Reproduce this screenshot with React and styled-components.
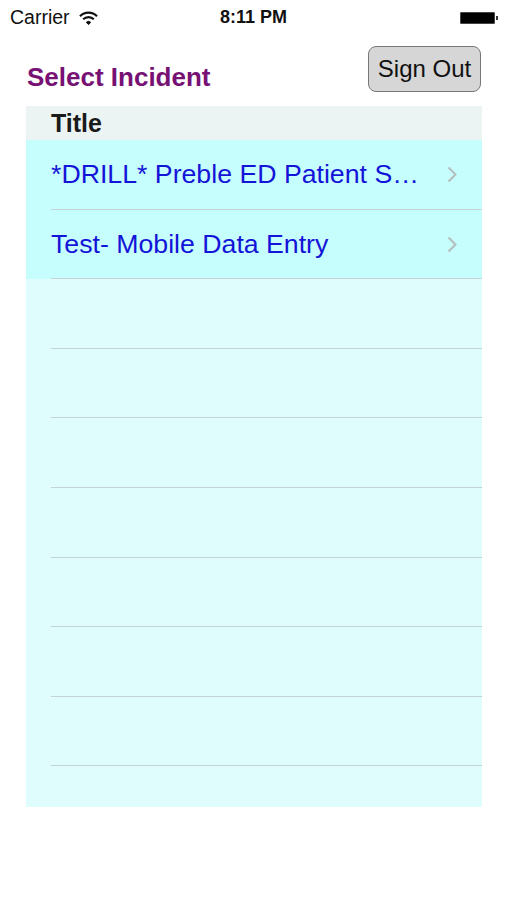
import React from 'react';
import styled, { createGlobalStyle } from 'styled-components';

const GlobalStyle = createGlobalStyle`
  html, body {
    margin: 0;
    padding: 0;
    background: #ffffff;
    font-family: "Liberation Sans", Arial, sans-serif;
  }
`;

const StyledScreen = styled.div`
  width: 507px;
  height: 900px;
  background: #ffffff;
  overflow: hidden;
`;

const StyledStatusBar = styled.div`
  height: 35px;
  display: grid;
  grid-template-columns: 1fr auto 1fr;
  align-items: center;
  padding: 0 10px;
  font-size: 19.5px;
  color: #111;
`;

const StyledCarrier = styled.div`
  display: flex;
  align-items: center;
  gap: 9px;
`;

const StyledClock = styled.div`
  font-weight: bold;
  font-size: 18px;
`;

const StyledBattery = styled.div`
  justify-self: end;
  display: flex;
  align-items: center;
  gap: 1px;
  margin-right: -1px;
`;

const StyledBatteryBody = styled.div`
  width: 33px;
  height: 10px;
  background: #000;
  border: 1px solid #444;
  border-radius: 1px;
`;

const StyledBatteryNub = styled.div`
  width: 2px;
  height: 4px;
  background: #333;
`;

const StyledHeader = styled.div`
  height: 71px;
  box-sizing: border-box;
  padding: 11px 26px 0 27px;
  display: flex;
  justify-content: space-between;
  align-items: flex-start;
`;

const StyledPageTitle = styled.h1`
  margin: 16px 0 0 0;
  font-size: 26px;
  font-weight: bold;
  color: #771274;
`;

const StyledSignOut = styled.button`
  width: 113px;
  height: 46px;
  box-sizing: border-box;
  background: #d6d6d6;
  border: 1.5px solid #777;
  border-radius: 8px;
  font-family: inherit;
  font-size: 24px;
  color: #111;
  padding: 0;
`;

const StyledTable = styled.div`
  margin: 0 25px 0 26px;
  height: 701px;
  background: #e0fdfd;
  display: flex;
  flex-direction: column;
  overflow: hidden;
`;

const StyledTableHeader = styled.div`
  height: 34px;
  flex-shrink: 0;
  background: #ecf4f3;
  padding: 1px 0 0 25px;
  box-sizing: border-box;
  display: flex;
  align-items: center;
  font-size: 25px;
  font-weight: bold;
  color: #1a1a1a;
`;

const StyledRow = styled.div`
  height: 69.6px;
  flex-shrink: 0;
  box-sizing: border-box;
  background: ${({ filled }) => (filled ? '#c6fdfd' : 'transparent')};
  padding-left: 25px;
  display: flex;
`;

const StyledRowInner = styled.div`
  flex: 1;
  display: flex;
  align-items: center;
  justify-content: space-between;
  padding: 1px 24px 0 0;
  border-bottom: 1px solid #c4d3d3;
`;

const StyledRowText = styled.span`
  font-size: 26.7px;
  color: #1414d8;
  white-space: nowrap;
`;

const Chevron = () => (
  <svg width="11" height="17" viewBox="0 0 11 17">
    <polyline points="1.5,1.5 8.5,8.5 1.5,15.5" fill="none" stroke="#b5bdbd" strokeWidth="2" />
  </svg>
);

const Wifi = () => (
  <svg width="19" height="14" viewBox="0 0 19 14">
    <path d="M1 5.2 A12 12 0 0 1 18 5.2" fill="none" stroke="#111" strokeWidth="2.2" />
    <path d="M4.2 8.3 A7.5 7.5 0 0 1 14.8 8.3" fill="none" stroke="#111" strokeWidth="2.2" />
    <path d="M7.3 11.3 A3.2 3.2 0 0 1 11.7 11.3 L9.5 13.6 Z" fill="#111" stroke="#111" strokeWidth="1" />
  </svg>
);

const incidents = ['*DRILL* Preble ED Patient S…', 'Test- Mobile Data Entry'];

const App = () => (
  <StyledScreen>
    <GlobalStyle />
    <StyledStatusBar>
      <StyledCarrier>
        Carrier
        <Wifi />
      </StyledCarrier>
      <StyledClock>8:11 PM</StyledClock>
      <StyledBattery>
        <StyledBatteryBody />
        <StyledBatteryNub />
      </StyledBattery>
    </StyledStatusBar>
    <StyledHeader>
      <StyledPageTitle>Select Incident</StyledPageTitle>
      <StyledSignOut>Sign Out</StyledSignOut>
    </StyledHeader>
    <StyledTable>
      <StyledTableHeader>Title</StyledTableHeader>
      {incidents.map((item) => (
        <StyledRow key={item} filled>
          <StyledRowInner>
            <StyledRowText>{item}</StyledRowText>
            <Chevron />
          </StyledRowInner>
        </StyledRow>
      ))}
      {Array.from({ length: 7 }).map((_, i) => (
        <StyledRow key={i}>
          <StyledRowInner />
        </StyledRow>
      ))}
    </StyledTable>
  </StyledScreen>
);

export default App;
